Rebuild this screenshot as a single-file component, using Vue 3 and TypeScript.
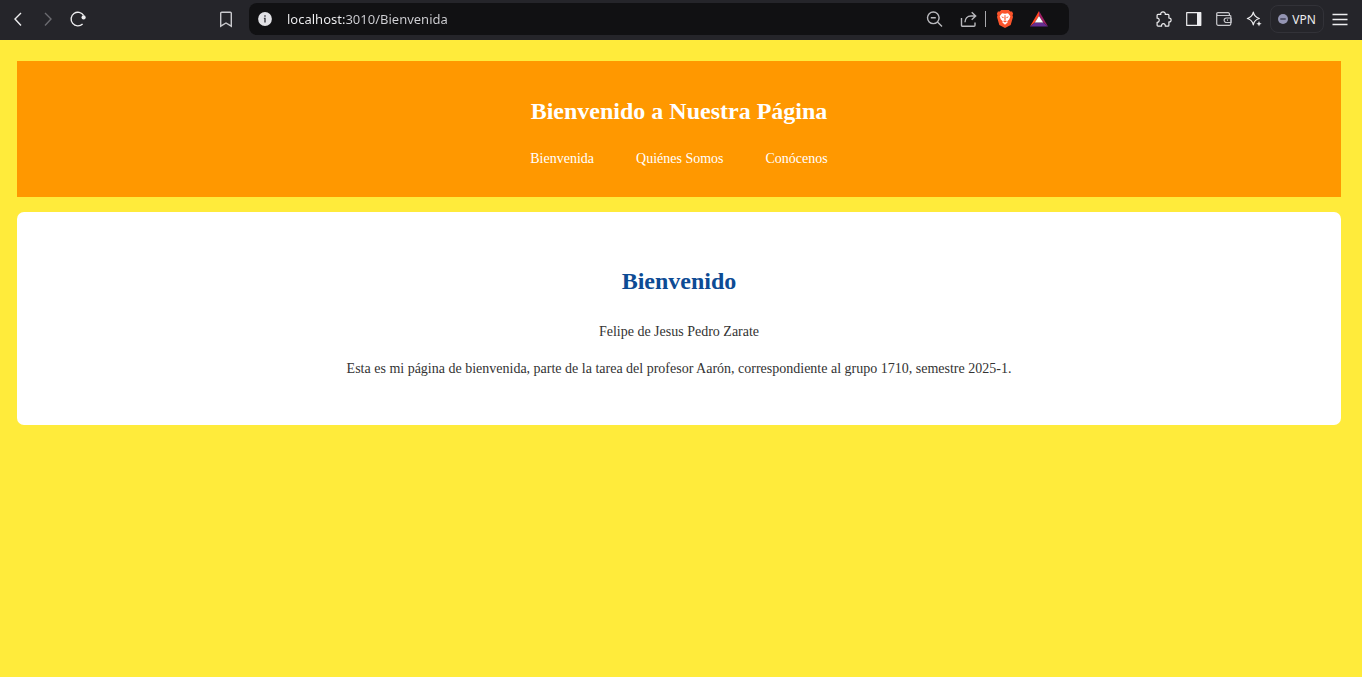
<script setup lang="ts">
import { ref } from 'vue'

interface NavLink {
  label: string
  href: string
}

const address = ref<string>('localhost:3010/Bienvenida')

const links: NavLink[] = [
  { label: 'Bienvenida', href: '#bienvenida' },
  { label: 'Quiénes Somos', href: '#quienes-somos' },
  { label: 'Conócenos', href: '#conocenos' },
]
</script>

<template>
  <div class="window">
    <div class="toolbar">
      <div class="group group-left">
        <button class="tool" type="button" aria-label="Atrás">
          <svg width="18" height="18" viewBox="0 0 18 18"><path d="M12 3 6 9l6 6.500" /></svg>
        </button>
        <button class="tool dim" type="button" aria-label="Adelante">
          <svg width="18" height="18" viewBox="0 0 18 18"><path d="M6 3l6 6-6 6.500" /></svg>
        </button>
        <button class="tool" type="button" aria-label="Recargar">
          <svg width="18" height="18" viewBox="0 0 18 18">
            <path d="M13.600 14A6.800 6.800 0 1 1 14.700 5.500" />
            <circle class="solid" cx="14.600" cy="7.400" r="2.100" />
          </svg>
        </button>
        <button class="tool bookmark" type="button" aria-label="Guardar marcador">
          <svg width="18" height="18" viewBox="0 0 18 18">
            <path d="M3.700 3.200a1 1 0 0 1 1-1h8.600a1 1 0 0 1 1 1v13L9 13l-5.300 3.200z" />
          </svg>
        </button>
      </div>

      <div class="address">
        <button class="tool info" type="button" aria-label="Información del sitio">
          <svg width="14" height="14" viewBox="0 0 14 14">
            <circle class="disc" cx="7" cy="7" r="6.900" />
            <path class="mark" d="M7 3.200v1.500M5.900 6.400H7v4" />
          </svg>
        </button>
        <input v-model="address" class="url" type="text" aria-label="Dirección" spellcheck="false" />
        <button class="tool wide" type="button" aria-label="Zoom">
          <svg class="soft" width="18" height="18" viewBox="-1 0 18 18">
            <circle cx="7.300" cy="7.800" r="5.800" />
            <path d="M4.800 7.800h5M11.500 12l4.500 4.500" />
          </svg>
        </button>
        <button class="tool wide" type="button" aria-label="Compartir">
          <svg class="soft" width="18" height="18" viewBox="-1 0 18 18">
            <path d="M1.500 8v7.200a1 1 0 0 0 1 1H14a1 1 0 0 0 1-1v-2.700M5 12.300c0-4 2.500-6.300 6-6.300h4.500M11.700 2.200l4 3.800-4 3.800" />
          </svg>
        </button>
        <span class="separator"></span>
        <button class="tool wide" type="button" aria-label="Brave Shields">
          <svg class="art" width="18" height="20" viewBox="0 0 18 20">
            <path fill="#fb542b" d="M5.200 1h7.600l1.500 1.600 1.800-.2 1 2.300-.6 1.600.5 1.700-2.300 8L9 19 3.300 16 1 8l.5-1.700-.6-1.600 1-2.300 1.800.2z" />
            <path fill="#fff" d="M6 4.200 9 4.700l3-.5 2.300 3-1 3-2 2 .3 1.300L9 15.700l-2.600-2.200.3-1.300-2-2-1-3z" />
            <path fill="#fb542b" d="m5.100 7.500 2.700.6-.7 1.200zM12.900 7.500l-2.700.6.700 1.200zM8.600 6h.8l.3 4.500-.7.700-.7-.7zM6.900 12.100 9 11.500l2.100.6L9 13.400z" />
          </svg>
        </button>
        <button class="tool wide" type="button" aria-label="Brave Rewards">
          <svg class="art" width="18" height="16" viewBox="0 0 18 16">
            <path fill="#ff4724" d="M9 0v5L4.800 11.500 0 15.500z" />
            <path fill="#9e1f63" d="M9 0l9 15.500-4.800-4L9 5z" />
            <path fill="#662d91" d="M0 15.500l4.800-4h8.400l4.800 4z" />
            <path fill="#fff" d="M9 5l4.200 6.500H4.800z" />
          </svg>
        </button>
      </div>

      <div class="group group-right">
        <button class="tool" type="button" aria-label="Extensiones">
          <svg class="fine" width="18" height="18" viewBox="0 0 18 18">
            <path d="M3 4.300h2.900C5.300 2.900 6.500 1.900 8 1.900s2.700 1 2.100 2.400H13a.9.900 0 0 1 .9.900v2.900c1.400-.3 2.200.6 2.200 1.900s-.8 2.200-2.200 1.900v3.300a.9.900 0 0 1-.9.900h-2.800c.3-1.500-.5-2.400-1.800-2.400s-2.100.9-1.800 2.400H3a.9.900 0 0 1-.9-.9v-2.900c1.300.1 2.100-.8 2.100-2.100S3.400 8.100 2.100 8.200v-3a.9.900 0 0 1 .9-.9z" />
          </svg>
        </button>
        <button class="tool" type="button" aria-label="Panel lateral">
          <svg class="fine" width="18" height="18" viewBox="0 0 18 18">
            <path d="M1.700 2.700h14.100v12.600H1.700z" />
            <path class="solid" d="M12 2.500h4v13h-4z" />
          </svg>
        </button>
        <button class="tool" type="button" aria-label="Cartera">
          <svg class="fine muted" width="18" height="18" viewBox="0 0 18 18">
            <path d="M15.800 5.500H3A1.400 1.400 0 0 1 3 2.700h10.200a1.200 1.200 0 0 1 1.200 1.200v1.600M1.700 4v9.800a1.500 1.500 0 0 0 1.500 1.500h11.100a1.500 1.500 0 0 0 1.500-1.500V5.500M16.200 8h-4.800a2.200 2.200 0 0 0 0 4.500h4.800zM12 10.200h1" />
          </svg>
        </button>
        <button class="tool" type="button" aria-label="Leo">
          <svg class="fine" width="18" height="18" viewBox="0 0 18 18">
            <path d="M8.300 2.200c.8 3.800 2.200 5.300 6 6.300-3.800 1-5.200 2.500-6 6.300-.8-3.800-2.200-5.300-6-6.300 3.800-1 5.200-2.500 6-6.300z" />
            <path class="solid" d="M14 11l.8 1.900 1.900.8-1.900.8-.8 1.900-.8-1.900-1.900-.8 1.900-.8z" />
          </svg>
        </button>
        <button class="vpn" type="button">
          <svg width="10" height="10" viewBox="0 0 10 10">
            <circle cx="5" cy="5" r="5" fill="#9495b3" />
            <path d="M2.300 5h5.400" stroke="#35354a" stroke-width="1.300" />
          </svg>
          VPN
        </button>
        <button class="tool" type="button" aria-label="Menú">
          <svg width="18" height="18" viewBox="0 0 18 18"><path d="M1.500 4.500h15M1.500 9.500h15M1.500 14.500h15" /></svg>
        </button>
      </div>
    </div>

    <main class="page">
      <header class="banner">
        <h1>Bienvenido a Nuestra Página</h1>
        <nav class="nav">
          <a v-for="link in links" :key="link.href" :href="link.href">{{ link.label }}</a>
        </nav>
      </header>
      <section class="card">
        <h2>Bienvenido</h2>
        <p>Felipe de Jesus Pedro Zarate</p>
        <p>Esta es mi página de bienvenida, parte de la tarea del profesor Aarón, correspondiente al grupo 1710, semestre 2025-1.</p>
      </section>
    </main>
  </div>
</template>

<style>
body {
  margin: 0;
  background: #ffeb3b;
}
</style>

<style scoped>
.window {
  font-family: "Liberation Serif", "Times New Roman", serif;
}

.toolbar {
  display: flex;
  align-items: center;
  height: 40px;
  padding-bottom: 2px;
  box-sizing: border-box;
  background: #25252a;
}

.group {
  display: flex;
  align-items: center;
  box-sizing: border-box;
}

.group-left {
  width: 249px;
  padding: 0 8px 0 3px;
}

.group-right {
  width: 293px;
  padding-right: 7px;
  justify-content: flex-end;
}

.tool {
  display: flex;
  align-items: center;
  justify-content: center;
  flex: none;
  width: 30px;
  height: 30px;
  padding: 0;
  border: 0;
  background: transparent;
  color: #ededef;
}

.tool svg {
  fill: none;
  stroke: currentColor;
  stroke-width: 1.4;
}

.tool .fine {
  stroke-width: 1.2;
  stroke-linejoin: round;
}

.tool .muted {
  color: #c9c9cd;
}

.tool .solid {
  fill: currentColor;
  stroke: none;
}

.tool .soft {
  color: #b9b9bd;
}

.tool .art {
  stroke: none;
}

.dim {
  color: #6b6b70;
}

.bookmark {
  margin-left: auto;
  color: #c9c9cd;
}

.address {
  display: flex;
  align-items: center;
  flex: 1;
  min-width: 0;
  height: 32px;
  padding: 0 13px 0 1px;
  box-sizing: border-box;
  border-radius: 8px;
  background: #111113;
}

.info .disc {
  fill: #e2e2e6;
  stroke: none;
}

.info .mark {
  stroke: #3a3a40;
}

.url {
  flex: 1;
  min-width: 0;
  height: 24px;
  margin-left: 7px;
  padding: 0;
  border: 0;
  outline: 0;
  background: linear-gradient(90deg, #f2f2f4 58px, #d2d2d6 58px);
  background-clip: text;
  color: transparent;
  caret-color: #f2f2f4;
  font: 13px "Noto Sans", "Open Sans", sans-serif;
}

.wide {
  width: 34px;
}

.separator {
  width: 1px;
  height: 16px;
  margin-right: 2px;
  background: #a9a9ad;
}

.vpn {
  display: flex;
  align-items: center;
  justify-content: center;
  gap: 4px;
  width: 54px;
  height: 28px;
  margin: 0 1px;
  padding: 0;
  border: 1px solid #323238;
  border-radius: 8px;
  background: transparent;
  color: #ededef;
  font: 12px "Noto Sans", "Open Sans", sans-serif;
}

.page {
  padding: 21px 21px 21px 17px;
  text-align: center;
}

.banner {
  padding: 36px 18px 29px;
  background: #ff9800;
  color: #fff;
}

h1,
h2 {
  margin: 0;
  font-size: 24px;
  line-height: 28px;
}

.nav {
  display: flex;
  justify-content: center;
  gap: 42px;
  margin-top: 25px;
}

.nav a {
  color: #fff;
  font-size: 14px;
  line-height: 18px;
  text-decoration: none;
}

.card {
  margin-top: 15px;
  padding: 55px 36px 47px;
  border-radius: 7px;
  background: #fff;
  color: #333;
}

h2 {
  margin-bottom: 28px;
  color: #0d4b94;
}

p {
  margin: 0;
  font-size: 14px;
  line-height: 18px;
}

p + p {
  margin-top: 19px;
}
</style>
